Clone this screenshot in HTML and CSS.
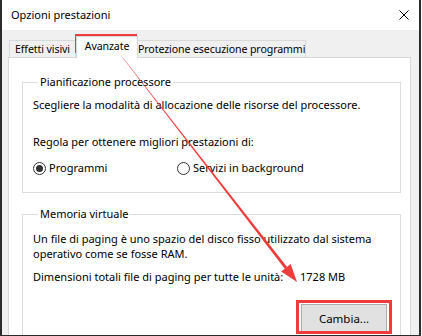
FILE: index.html
```html
<!DOCTYPE html>
<html lang="it">
<head>
<meta charset="utf-8">
<title>Opzioni prestazioni</title>
<link rel="stylesheet" href="styles.css">
</head>
<body>
<div class="window">
  <div class="titlebar">
    <span class="title">Opzioni prestazioni</span>
    <svg class="close" width="10" height="10" viewBox="0 0 10 10"><path d="M0.5 0.5L9.5 9.5M9.5 0.5L0.5 9.5" stroke="#000" stroke-width="1" fill="none"/></svg>
  </div>
  <div class="client">
    <div class="tabs">
      <div class="tab tab-effetti">Effetti visivi</div>
      <div class="tab tab-avanzate active">Avanzate</div>
      <div class="tab tab-protezione">Protezione esecuzione programmi</div>
    </div>
    <div class="panel">
      <fieldset class="group group-cpu">
        <legend>Pianificazione processore</legend>
        <p class="line">Scegliere la modalità di allocazione delle risorse del processore.</p>
        <p class="line line-gap">Regola per ottenere migliori prestazioni di:</p>
        <div class="radios">
          <label class="radio radio-first"><svg class="rbtn" width="13" height="13" viewBox="0 0 13 13"><circle cx="6.5" cy="6.5" r="6" fill="#fff" stroke="#333" stroke-width="1"/><circle cx="6.5" cy="6.5" r="3.5" fill="#333"/></svg>Programmi</label>
          <label class="radio"><svg class="rbtn" width="13" height="13" viewBox="0 0 13 13"><circle cx="6.5" cy="6.5" r="6" fill="#fff" stroke="#333" stroke-width="1"/></svg>Servizi in background</label>
        </div>
      </fieldset>
      <fieldset class="group group-mem">
        <legend>Memoria virtuale</legend>
        <p class="line">Un file di paging è uno spazio del disco fisso utilizzato dal sistema</p>
        <p class="line">operativo come se fosse RAM.</p>
        <div class="total">
          <span class="total-label">Dimensioni totali file di paging per tutte le unità:</span>
          <span class="total-value">1728 MB</span>
        </div>
        <div class="actions">
          <button class="btn">Cambia...</button>
        </div>
      </fieldset>
    </div>
  </div>
</div>
<svg class="annot" width="422" height="336" viewBox="0 0 422 336">
  <rect x="76.5" y="35.5" width="59" height="16" fill="none" stroke="#ef3b3b" stroke-width="3"/>
  <rect x="297.5" y="301.5" width="93" height="31" fill="none" stroke="#ef3b3b" stroke-width="3"/>
  <polygon points="122.6,57.7 123.4,58.3 287.1,266.9 284.8,268.7" fill="#ef3b3b"/>
  <polygon points="297,282 281.2,271.5 290.7,264.1" fill="#ef3b3b"/>
</svg>
</body>
</html>
```

FILE: styles.css
```css
html, body {
  margin: 0;
  padding: 0;
}
body {
  position: relative;
  width: 422px;
  height: 336px;
  background: #ffffff;
  overflow: hidden;
  font-family: "Noto Sans", "Liberation Sans", sans-serif;
  font-size: 11px;
  color: #000;
}
.window {
  box-sizing: border-box;
  width: 421px;
  height: 336px;
  border-left: 2px solid #2b2b2b;
  border-right: 2px solid #2b2b2b;
  border-bottom: 1px solid #2b2b2b;
  display: flex;
  flex-direction: column;
  background: #f0f0f0;
}
.titlebar {
  height: 30px;
  flex: none;
  background: #fff;
  display: flex;
  align-items: center;
  justify-content: space-between;
  padding-left: 9px;
  padding-right: 10px;
}
.title {
  font-size: 11px;
  line-height: 16px;
}
.close {
  display: block;
}
.client {
  flex: 1;
  overflow: hidden;
  padding: 6px 8px 0 6px;
}
.tabs {
  display: flex;
  align-items: flex-end;
  height: 21px;
  padding-left: 1px;
}
.tab {
  box-sizing: border-box;
  flex: none;
  min-width: 0;
  overflow: hidden;
  height: 17px;
  border: 1px solid #d9d9d9;
  border-bottom: none;
  background: #f0f0f0;
  text-align: center;
  line-height: 16px;
  white-space: nowrap;
  font-size: 10.6px;
  letter-spacing: -0.1px;
}
.tab-effetti {
  width: 67px;
}
.tab-avanzate {
  width: 62px;
}
.tab-protezione {
  width: 169px;
  margin-left: -1px;
}
.tab.active {
  position: relative;
  z-index: 1;
  height: 22px;
  margin-bottom: -1px;
  background: #fff;
  line-height: 19px;
}
.panel {
  box-sizing: border-box;
  height: 300px;
  background: #fff;
  border: 1px solid #d9d9d9;
  padding: 16px 9px 0 13px;
}
.group {
  margin: 0;
  padding: 7px 10px 16px 10px;
  border: 1px solid #dcdcdc;
  min-width: 0;
}
.group legend {
  padding: 0 2px;
  margin-left: 5px;
  line-height: 16px;
}
.group-mem {
  margin-top: 13px;
  padding-top: 9px;
}
.line {
  margin: 0;
  line-height: 15px;
  white-space: nowrap;
}
.line-gap {
  margin-top: 22px;
}
.radios {
  display: flex;
  margin-top: 11px;
  height: 16px;
  align-items: center;
}
.radio {
  display: flex;
  align-items: center;
  gap: 3px;
  line-height: 16px;
}
.radio-first {
  width: 144px;
}
.rbtn {
  display: block;
}
.total {
  display: flex;
  margin-top: 8px;
  line-height: 15px;
  white-space: nowrap;
}
.total-label {
  width: 267px;
  flex: none;
}
.actions {
  display: flex;
  justify-content: flex-end;
  margin-top: 20px;
  padding-right: 3px;
}
.btn {
  box-sizing: border-box;
  width: 86px;
  height: 28px;
  background: #e1e1e1;
  border: 1px solid #adadad;
  font-family: inherit;
  font-size: 11.5px;
  color: #000;
  padding: 0;
}
.annot {
  position: absolute;
  left: 0;
  top: 0;
  pointer-events: none;
}
```
